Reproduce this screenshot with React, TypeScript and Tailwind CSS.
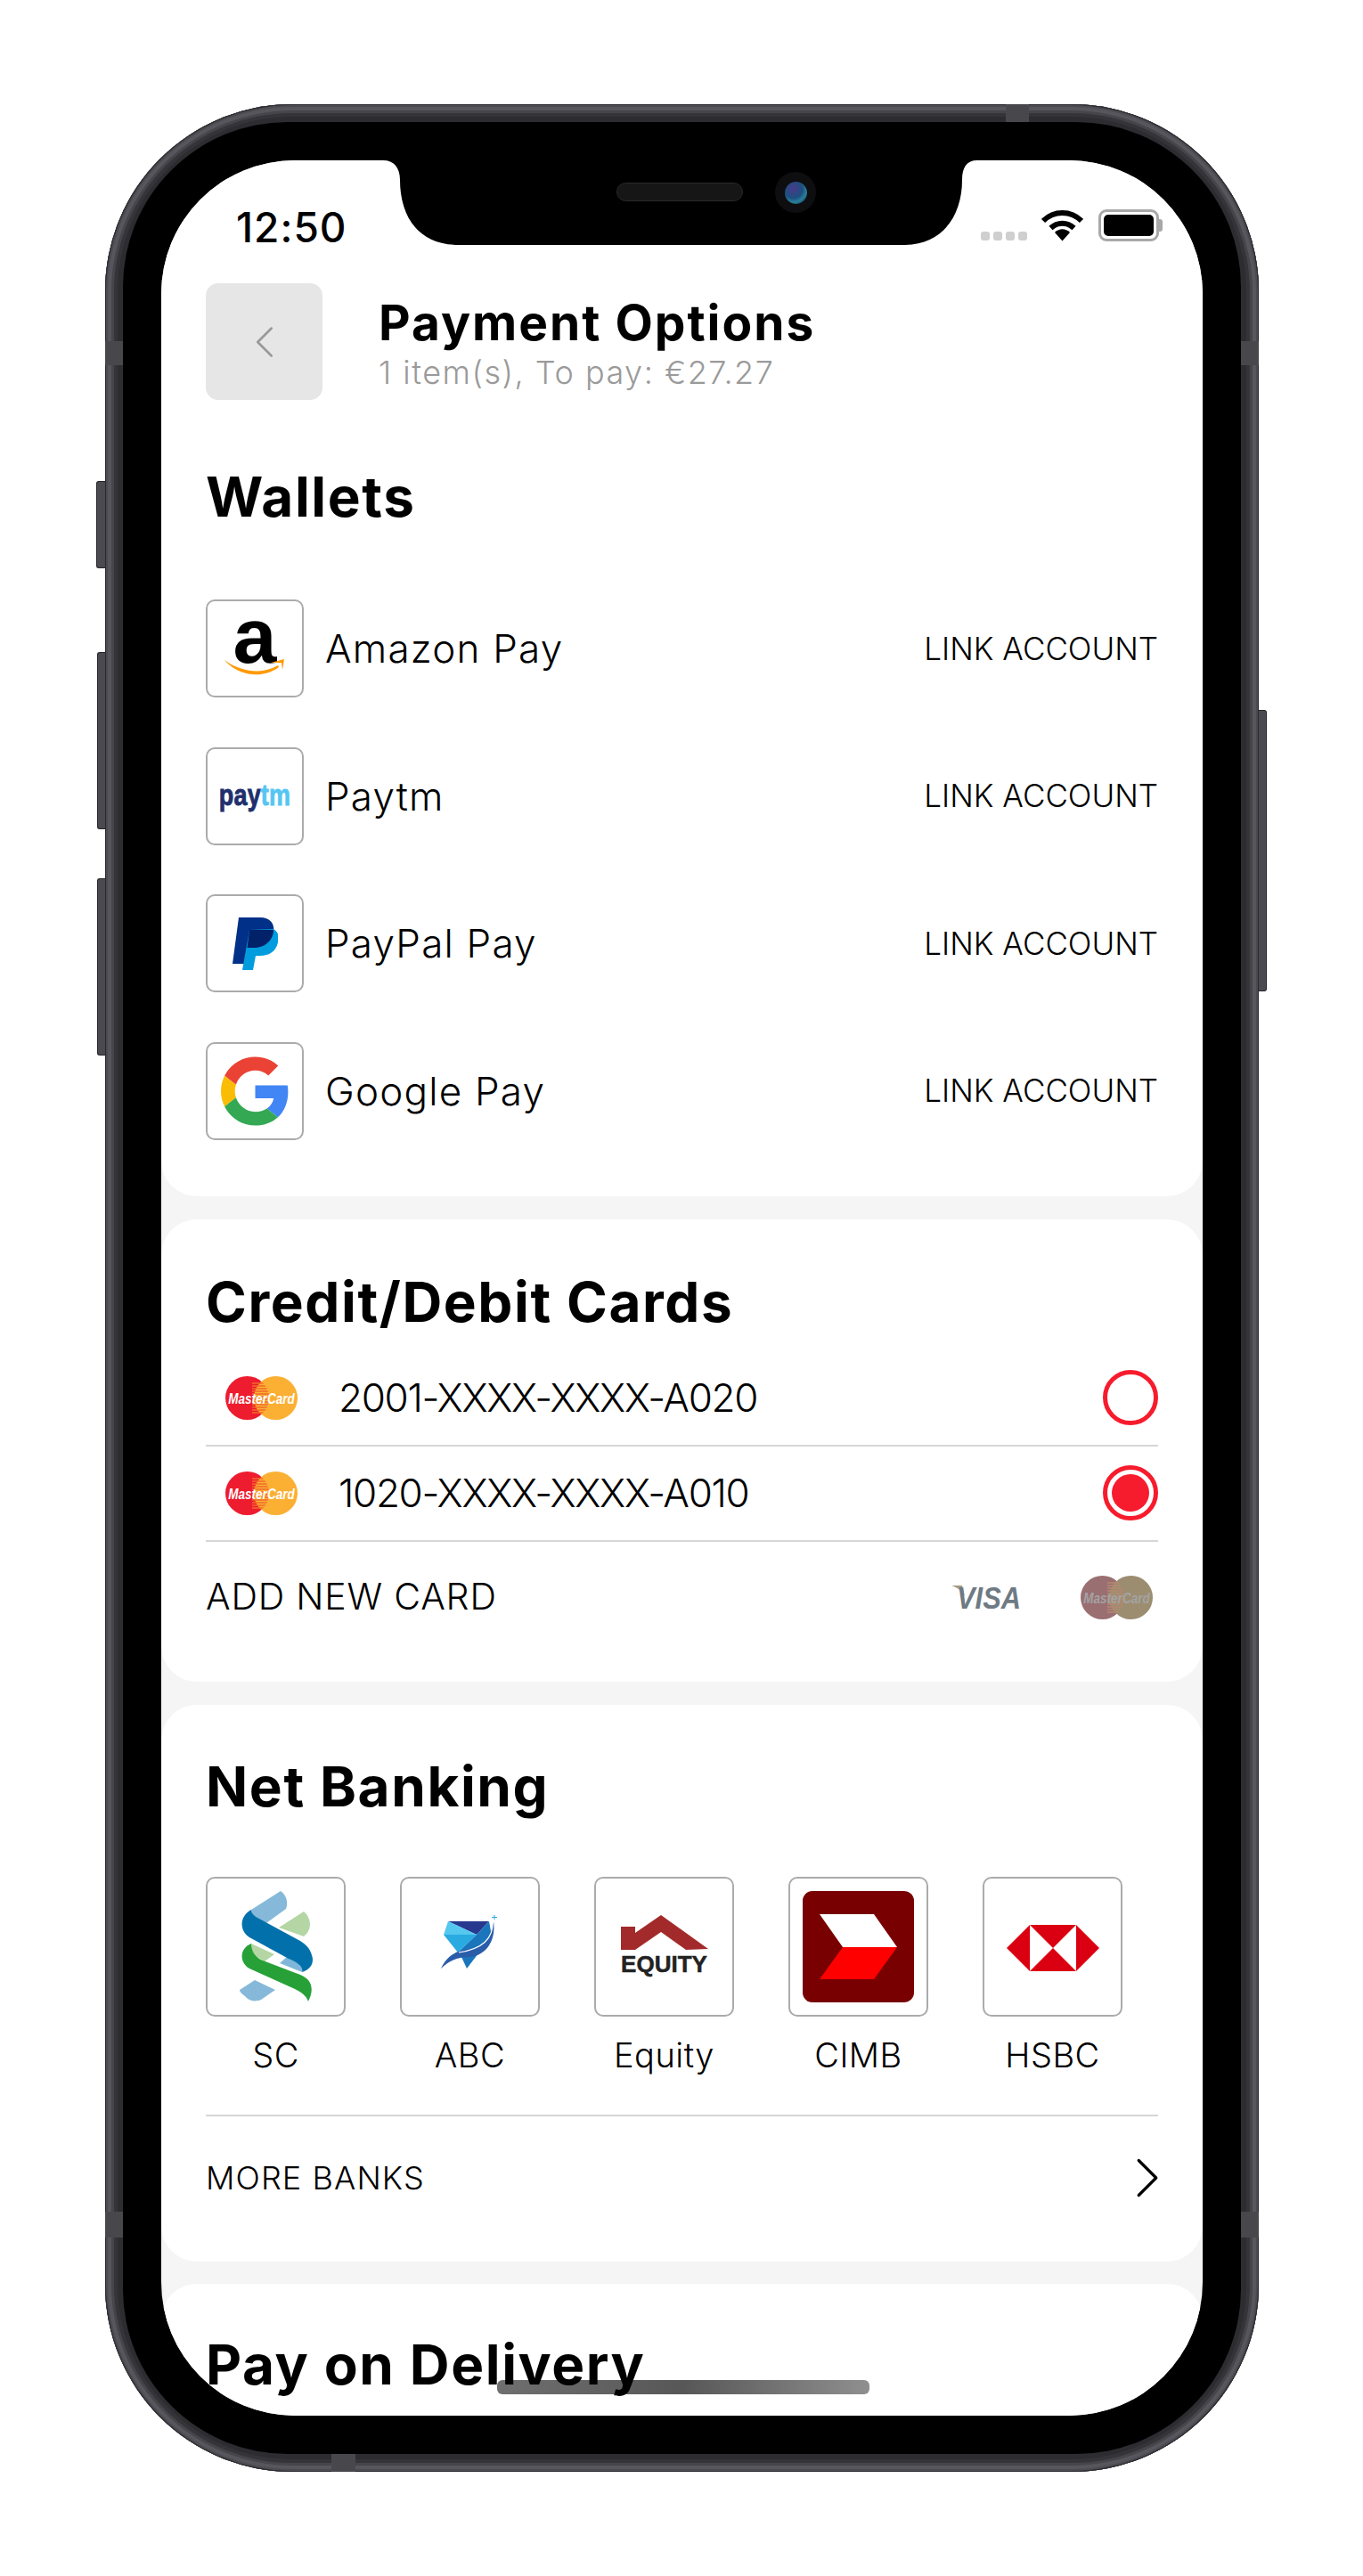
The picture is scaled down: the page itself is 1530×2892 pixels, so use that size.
import React from 'react';
import { ChevronLeft, ChevronRight } from 'lucide-react';

const wallets = [
  { name: 'Amazon Pay', logo: <AmazonLogo /> },
  { name: 'Paytm', logo: <PaytmLogo /> },
  { name: 'PayPal Pay', logo: <PaypalLogo /> },
  { name: 'Google Pay', logo: <GoogleLogo /> },
];

const banks = [
  { name: 'SC', logo: <ScLogo /> },
  { name: 'ABC', logo: <AbcLogo /> },
  { name: 'Equity', logo: <EquityLogo /> },
  { name: 'CIMB', logo: <CimbLogo /> },
  { name: 'HSBC', logo: <HsbcLogo /> },
];

function AmazonLogo() {
  return (
    <div className="relative flex h-[60px] w-[68px] flex-col items-center">
      <span className="-mt-[7px] font-['Liberation_Sans',sans-serif] text-[88px] leading-[46px] font-bold text-black">a</span>
      <svg className="absolute top-0 left-0 mt-[40px]" width="68" height="22" viewBox="0 0 68 22">
        <path d="M0 3C18 16 42 20 60 9L61 11C44 24 16 22 0 3Z" fill="#f90" />
        <path d="M52 6L67 2L65 14L64 6Z" fill="#f90" />
      </svg>
    </div>
  );
}

function PaytmLogo() {
  return (
    <span className="scale-y-[1.2] font-['Liberation_Sans',sans-serif] text-[27px] leading-none font-bold tracking-[0.2px] [-webkit-text-stroke:0.7px]">
      <span className="text-[#202f6c]">pay</span>
      <span className="text-[#55c6f3]">tm</span>
    </span>
  );
}

function PaypalLogo() {
  return (
    <svg width="51" height="59" viewBox="0 0 51 59">
      <path d="M7 0H31C42 0 48 7 46 17C44 28 35 34 24 34H17L13 52H0Z" fill="#003087" />
      <path d="M46 13C51 16 53 21 51 28C49 38 41 43 31 43H26L23 59H11L19 14Z" fill="#009cde" />
      <path d="M19 14H46C46 24 38 34 24 34H16.5Z" fill="#012169" />
    </svg>
  );
}

function GoogleLogo() {
  return (
    <svg width="77" height="78" viewBox="0 0 48 48">
      <path fill="#EA4335" d="M24 9.5c3.54 0 6.71 1.22 9.21 3.6l6.85-6.85C35.9 2.38 30.47 0 24 0 14.62 0 6.51 5.38 2.56 13.22l7.98 6.19C12.43 13.72 17.74 9.5 24 9.5z" />
      <path fill="#4285F4" d="M46.98 24.55c0-1.57-.15-3.09-.38-4.55H24v9.02h12.94c-.58 2.96-2.26 5.48-4.78 7.18l7.73 6c4.51-4.18 7.09-10.36 7.09-17.65z" />
      <path fill="#FBBC05" d="M10.53 28.59c-.48-1.45-.76-2.99-.76-4.59s.27-3.14.76-4.59l-7.98-6.19C.92 16.46 0 20.12 0 24c0 3.88.92 7.54 2.56 10.78l7.97-6.19z" />
      <path fill="#34A853" d="M24 48c6.48 0 11.93-2.13 15.89-5.81l-7.73-6c-2.15 1.45-4.92 2.3-8.16 2.3-6.26 0-11.57-4.22-13.47-9.91l-7.98 6.19C6.51 42.62 14.62 48 24 48z" />
    </svg>
  );
}

function MasterCardLogo({ dim = false }: { dim?: boolean }) {
  const left = dim ? '#9a6f72' : '#ed1c2e';
  const right = dim ? '#9c8d70' : '#fbb034';
  const stripe = dim ? '#b58a72' : '#f26a2a';
  return (
    <svg width="81" height="49" viewBox="0 0 81 49">
      <defs>
        <clipPath id="mc-overlap">
          <circle cx="24.5" cy="24.5" r="24.5" />
        </clipPath>
      </defs>
      <circle cx="24.5" cy="24.5" r="24.5" fill={left} />
      <circle cx="56.5" cy="24.5" r="24.5" fill={right} />
      <g clipPath="url(#mc-overlap)" stroke={stripe} strokeWidth="1.5">
        {[8, 11, 14, 17, 20, 23, 26, 29, 32, 35, 38, 41].map((y) => (
          <line key={y} x1="30" x2="50" y1={y} y2={y} />
        ))}
      </g>
      <text
        transform="translate(40.5 31) scale(0.82 1)"
        textAnchor="middle"
        fontSize="16.5"
        fontWeight="700"
        fontStyle="italic"
        fontFamily="Liberation Sans, sans-serif"
        fill={dim ? '#a3a3a3' : '#ffffff'}
      >
        MasterCard
      </text>
    </svg>
  );
}

function VisaLogo() {
  return (
    <svg width="78" height="42" viewBox="0 0 78 42">
      <path d="M0 8H12L15 20C12 14 6 10 0 8Z" fill="#a89a84" />
      <text
        transform="translate(42 34) scale(0.88 1)"
        textAnchor="middle"
        fontSize="35"
        fontWeight="700"
        fontStyle="italic"
        fontFamily="Liberation Sans, sans-serif"
        fill="#6e7a84"
      >
        VISA
      </text>
    </svg>
  );
}

function ScLogo() {
  return (
    <svg width="82" height="124" viewBox="0 0 82 124">
      <path d="M13 21L46 0C52 4 55 12 52 20L30 36C20 32 13 28 13 21Z" fill="#86b9d9" />
      <path d="M44 41L72 23C78 28 82 38 76 47L72 51Z" fill="#b4d6a4" />
      <path d="M45 81L53 74L72 84L70 91Z" fill="#7fb6d9" />
      <path d="M13 21C0 28 -1 44 11 52L55 76C65 80 72 85 70 91C80 88 84 80 81 72C79 64 74 60 68 56L20 30C15 27 13 24 13 21Z" fill="#0271ab" />
      <path d="M13 59L39 71L28 79L12 70Z" fill="#b4d6a4" />
      <path d="M13 59C0 64 -1 80 11 87L62 110C70 114 75 118 77 124C83 112 83 100 68 94L26 78C18 75 13 68 13 59Z" fill="#27a137" />
      <path d="M17 100L40 111L24 122C16 125 10 123 6 118C2 115 0 113 0 111Z" fill="#86b9d9" />
    </svg>
  );
}

function AbcLogo() {
  return (
    <svg width="65" height="60" viewBox="0 0 65 60">
      <polygon points="8,7 54,7 40,22" fill="#27388f" />
      <polygon points="8,7 3,22 40,22" fill="#55c8ef" />
      <polygon points="3,22 40,22 19,42" fill="#29abe2" />
      <polygon points="54,7 40,22 19,42 42,43 57,24" fill="#1b75bc" />
      <polygon points="23,47 42,43 29,60" fill="#1b75bc" />
      <path d="M0 60C6 46 18 39 32 38C46 36 56 28 59 7C62 30 50 44 34 47C20 47 10 50 0 60Z" fill="#2a5caa" />
      <path d="M58 7C59 26 47 38 20 42" stroke="#ffffff" strokeWidth="1.2" fill="none" />
      <path d="M60 0V5M57 2.5H63" stroke="#29abe2" strokeWidth="1" />
    </svg>
  );
}

function EquityLogo() {
  return (
    <div className="flex w-[98px] flex-col items-center">
      <svg width="98" height="39" viewBox="0 0 98 39">
        <polygon points="0,13 16,13 16,20 45,0 98,38 73,39 45,19 16,39 0,39" fill="#a32a2a" />
      </svg>
      <span className="mt-[5px] font-['Liberation_Sans',sans-serif] text-[26px] leading-[22px] font-bold text-[#222] [-webkit-text-stroke:0.5px]">EQUITY</span>
    </div>
  );
}

function CimbLogo() {
  return (
    <svg width="125" height="125" viewBox="0 0 125 125">
      <rect width="125" height="125" rx="11" fill="#780000" />
      <polygon points="19,26 80,26 106,63 45,63" fill="#ffffff" />
      <polygon points="45,63 106,63 80,99 19,99" fill="#ff0000" />
    </svg>
  );
}

function HsbcLogo() {
  return (
    <svg width="104" height="52" viewBox="0 0 104 52">
      <polygon points="0,26 26,0 26,52" fill="#db0011" />
      <polygon points="26,0 78,0 52,26" fill="#db0011" />
      <polygon points="26,52 78,52 52,26" fill="#db0011" />
      <polygon points="78,0 104,26 78,52" fill="#db0011" />
    </svg>
  );
}

function Heading({ children }: { children: React.ReactNode }) {
  return <h2 className="text-[62px] leading-[70px] font-bold tracking-[1.6px] text-black">{children}</h2>;
}

function StatusBar() {
  return (
    <div className="flex h-[138px] items-start justify-between pt-[49px] pr-[45px] pl-[84px]">
      <span className="text-[46px] leading-[52px] font-medium tracking-[1px] text-black">12:50</span>
      <div className="flex items-end pt-[6px]">
        <div className="mb-[1px] flex gap-[4px]">
          <span className="h-[10px] w-[10px] rounded-[3px] bg-[#cfcfcf]" />
          <span className="h-[10px] w-[10px] rounded-[3px] bg-[#cfcfcf]" />
          <span className="h-[10px] w-[10px] rounded-[3px] bg-[#cfcfcf]" />
          <span className="h-[10px] w-[10px] rounded-[3px] bg-[#cfcfcf]" />
        </div>
        <svg className="ml-[16px]" width="47" height="36" viewBox="0 0 47 36" fill="none">
          <path d="M2 13C14 1 33 1 45 13" stroke="#000" strokeWidth="6" />
          <path d="M10.5 21C18 14 29 14 36.5 21" stroke="#000" strokeWidth="6" />
          <path d="M15 26C20 21 27 21 32 26L23.5 35.5Z" fill="#000" />
        </svg>
        <div className="ml-[17px] flex h-[36px] items-center">
          <div className="h-[36px] w-[68px] rounded-[9px] border-[3px] border-[#a8a8a8] p-[3px]">
            <div className="h-full w-full rounded-[5px] bg-black" />
          </div>
          <div className="h-[14px] w-[4px] rounded-r-[3px] bg-[#a8a8a8]" />
        </div>
      </div>
    </div>
  );
}

function Notch() {
  return (
    <svg className="absolute top-0 left-[249px]" width="667" height="95" viewBox="0 0 667 95">
      <path d="M0 0H667C655 0 650 8 650 22C650 60 630 95 584 95H85C37 95 19 60 19 22C19 8 12 0 0 0Z" fill="#000" />
    </svg>
  );
}

function Hardware() {
  return (
    <>
      <div className="absolute top-[25px] left-[511px] h-[21px] w-[142px] rounded-full border border-[#2a2a2a] bg-[#161616]" />
      <div className="absolute top-[13px] left-[689px] flex h-[46px] w-[46px] items-center justify-center rounded-full bg-[#0e0e10]">
        <div className="h-[25px] w-[25px] rounded-full bg-[radial-gradient(circle_at_38%_32%,#4a3a8a,#1c4f80_45%,#2a7f9c_65%,#0a1a30_95%)]" />
      </div>
      <div className="absolute top-[2492px] left-[377px] h-[16px] w-[418px] rounded-[6px] bg-linear-to-r from-[#00000090] via-[#000000a8] to-[#00000070]" />
    </>
  );
}

const bandMark = 'absolute bg-[#48484c]';

export default function App() {
  return (
    <div className="min-h-[2892px] bg-white pt-[117px] pl-[118px] font-['Inter',sans-serif] text-black">
      <div className="relative h-[2658px] w-[1295px] rounded-[210px] bg-[#2c2c31] p-[20px] shadow-[inset_0_0_0_1px_#2a2a2e,inset_0_0_0_3px_#4a4a50,inset_0_0_0_7px_#56565c,inset_0_0_0_10px_#45454a,inset_0_0_0_14px_#343439]">
        {/* side buttons */}
        <div className="absolute top-[423px] left-[-10px] h-[98px] w-[10px] rounded-l-[3px] border-y border-l border-[#26262a] bg-[#4a4a50]" />
        <div className="absolute top-[615px] left-[-9px] h-[199px] w-[9px] rounded-l-[3px] border-y border-l border-[#26262a] bg-[#4a4a50]" />
        <div className="absolute top-[869px] left-[-9px] h-[199px] w-[9px] rounded-l-[3px] border-y border-l border-[#26262a] bg-[#4a4a50]" />
        <div className="absolute top-[680px] right-[-9px] h-[316px] w-[9px] rounded-r-[3px] border-y border-r border-[#26262a] bg-[#4a4a50]" />
        {/* antenna bands */}
        <div className={`${bandMark} top-[266px] left-0 h-[27px] w-[20px]`} />
        <div className={`${bandMark} top-[266px] right-0 h-[27px] w-[20px]`} />
        <div className={`${bandMark} top-[2366px] left-0 h-[29px] w-[20px]`} />
        <div className={`${bandMark} top-[2366px] right-0 h-[29px] w-[20px]`} />
        <div className={`${bandMark} top-0 left-[1011px] h-[20px] w-[26px]`} />
        <div className={`${bandMark} bottom-0 left-[254px] h-[20px] w-[27px]`} />

        <div className="h-full rounded-[185px] bg-black p-[43px]">
          <div className="relative h-[2532px] w-[1169px] overflow-hidden rounded-[150px] bg-[#f5f5f5]">
            <section className="rounded-b-[40px] bg-white px-[50px] pb-[63px]">
              <div className="-mx-[50px]">
                <StatusBar />
              </div>
              <header className="flex items-start">
                <button className="flex h-[131px] w-[131px] items-center justify-center rounded-[14px] bg-[#e6e6e6] text-[#999]">
                  <ChevronLeft size={62} strokeWidth={1} />
                </button>
                <div className="ml-[63px] pt-[14px]">
                  <h1 className="text-[55px] leading-[60px] font-bold tracking-[2px] text-black">Payment Options</h1>
                  <p className="mt-[4px] text-[36px] leading-[44px] font-light tracking-[1.5px] text-[#9a9a9a]">1 item(s), To pay: €27.27</p>
                </div>
              </header>
              <div className="mt-[74px]">
                <Heading>Wallets</Heading>
              </div>
              <div className="mt-[80px] flex flex-col gap-[55.5px]">
                {wallets.map((w) => (
                  <div key={w.name} className="flex items-center">
                    <div className="flex h-[110px] w-[110px] items-center justify-center rounded-[10px] border-2 border-[#ababab]">{w.logo}</div>
                    <span className="ml-[24px] text-[44px] font-light tracking-[1.2px] text-black">{w.name}</span>
                    <span className="ml-auto text-[35px] font-light text-black">LINK ACCOUNT</span>
                  </div>
                ))}
              </div>
            </section>

            <section className="mt-[26px] rounded-[40px] bg-white px-[50px] pt-[58px] pb-[32px]">
              <Heading>Credit/Debit Cards</Heading>
              <div className="mt-[20px]">
                {['2001-XXXX-XXXX-A020', '1020-XXXX-XXXX-A010'].map((card, i) => (
                  <div key={card} className="flex h-[107px] items-center border-b-2 border-[#d6d6d6]">
                    <div className="ml-[22px]">
                      <MasterCardLogo />
                    </div>
                    <span className="ml-[46px] text-[44px] font-light tracking-[-1.3px] text-black">{card}</span>
                    <div className="ml-auto flex h-[62px] w-[62px] items-center justify-center rounded-full border-[5px] border-[#f61c2d]">
                      {i === 1 && <div className="h-[42px] w-[42px] rounded-full bg-[#f61c2d]" />}
                    </div>
                  </div>
                ))}
                <div className="flex h-[125px] items-center">
                  <span className="text-[41px] font-light tracking-[0.8px] text-black">ADD NEW CARD</span>
                  <div className="ml-auto">
                    <VisaLogo />
                  </div>
                  <div className="mr-[6px] ml-[67px]">
                    <MasterCardLogo dim />
                  </div>
                </div>
              </div>
            </section>

            <section className="mt-[26px] rounded-[40px] bg-white px-[50px] pt-[57px] pb-[27px]">
              <Heading>Net Banking</Heading>
              <div className="mt-[66px] flex gap-[61px]">
                {banks.map((b) => (
                  <div key={b.name} className="flex w-[157px] flex-col items-center">
                    <div className={`flex h-[157px] w-[157px] justify-center rounded-[10px] border-2 border-[#ababab] ${b.name === 'CIMB' || b.name === 'SC' ? 'items-center' : b.name === 'HSBC' ? 'items-start pt-[52px]' : 'items-start pt-[41px]'}`}>
                      {b.logo}
                    </div>
                    <span className="mt-[18px] text-[38px] leading-[50px] font-light tracking-[0.5px] text-black">{b.name}</span>
                  </div>
                ))}
              </div>
              <div className="mt-[42px] flex h-[138px] items-center border-t-2 border-[#d6d6d6] pt-[2px]">
                <span className="text-[36px] font-light tracking-[1.1px] text-black">MORE BANKS</span>
                <ChevronRight className="-mr-[27px] ml-auto" size={78} strokeWidth={1} />
              </div>
            </section>

            <section className="mt-[25px] rounded-t-[40px] bg-white px-[50px] pt-[56px] pb-[60px]">
              <Heading>Pay on Delivery</Heading>
            </section>

            <Notch />
            <Hardware />
          </div>
        </div>
      </div>
    </div>
  );
}
